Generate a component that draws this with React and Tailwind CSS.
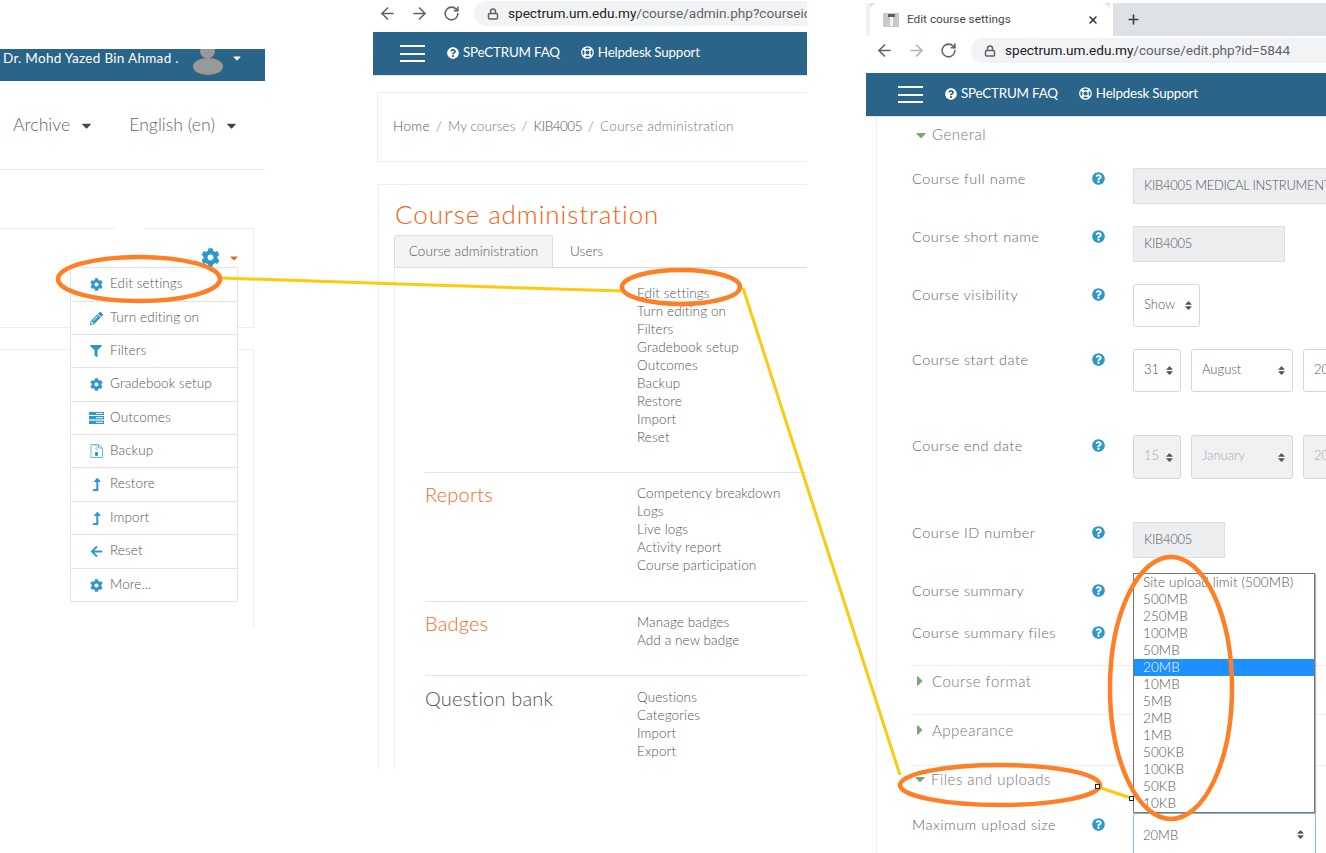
import React from "react";
import { FaCog, FaPencilAlt, FaFilter, FaLevelUpAlt, FaArrowLeft, FaQuestionCircle, FaRegLifeRing, FaCaretDown, FaCaretRight, FaSort } from "react-icons/fa";
import { ArrowLeft, ArrowRight, RotateCw, Lock, X, Plus } from "lucide-react";

const OutcomesIcon = () => (
  <svg width="15" height="12" viewBox="0 0 15 12" fill="#2f98c9">
    <rect x="0" y="0" width="15" height="3" />
    <rect x="0" y="4" width="15" height="3.4" />
    <rect x="0" y="8.6" width="15" height="3.4" />
    <rect x="7" y="1" width="7" height="1" fill="#fff" />
    <rect x="7" y="5.2" width="7" height="1" fill="#fff" />
    <rect x="7" y="9.8" width="7" height="1" fill="#fff" />
  </svg>
);

const BackupIcon = () => (
  <svg width="13" height="14" viewBox="0 0 13 14" fill="none">
    <path d="M1 .5h7.5L12.5 4v9.5H1z" fill="#fff" stroke="#6db8e0" />
    <path d="M8.5.5V4h4" stroke="#6db8e0" />
    <path d="M5.5 1h1v1h-1zM6.5 2.5h1v1h-1zM5.5 4h1v1h-1zM6.5 5.5h1v1h-1z" fill="#2f98c9" />
    <rect x="5" y="8" width="3" height="4" rx="1" fill="#2f98c9" />
  </svg>
);

const menu = [
  ["Edit settings", <FaCog size={13} />, "h-[33px]"],
  ["Turn editing on", <FaPencilAlt size={13} />, "h-[33px]"],
  ["Filters", <FaFilter size={12} />, "h-[33px]"],
  ["Gradebook setup", <FaCog size={13} />, "h-[34px]"],
  ["Outcomes", <OutcomesIcon />, "h-[33px]"],
  ["Backup", <BackupIcon />, "h-[33px]"],
  ["Restore", <FaLevelUpAlt size={13} />, "h-[34px]"],
  ["Import", <FaLevelUpAlt size={13} />, "h-[33px]"],
  ["Reset", <FaArrowLeft size={13} />, "h-[34px]"],
  ["More...", <FaCog size={13} />, "h-[33px]"],
];

function Topbar({ right }) {
  return (
    <div className="h-[44px] bg-[#2a6488] border-b border-[#dfe3e6] flex items-center text-white text-[13.4px] font-normal tracking-[-0.2px]">
      <div className={`${right ? "ml-[32px]" : "ml-[27px]"} w-[25px] flex flex-col gap-[5.5px]`}>
        <span className="block h-[2px] bg-white" />
        <span className="block h-[2px] bg-white" />
        <span className="block h-[2px] bg-white" />
      </div>
      <FaQuestionCircle size={12} className="ml-[22px] -mt-[2px]" />
      <span className="ml-[4px] -mt-[2px]">SPeCTRUM FAQ</span>
      <FaRegLifeRing size={13} className="ml-[21px] -mt-[2px]" />
      <span className="ml-[4px] -mt-[2px]">Helpdesk Support</span>
    </div>
  );
}

function Nav({ url1, url2, forward }) {
  return (
    <div className="flex items-center text-[#5f6368]">
      <ArrowLeft size={19} strokeWidth={2} />
      <ArrowRight size={19} strokeWidth={2} className={`ml-[13px] ${forward}`} />
      <RotateCw size={17} strokeWidth={2.2} className="ml-[14px]" />
      <div className="ml-[14px] flex-1 h-[25px] bg-[#f1f3f4] rounded-l-full flex items-center pl-[13px] overflow-hidden whitespace-nowrap font-['Roboto',sans-serif] font-normal text-[13.6px]">
        <Lock size={12} strokeWidth={3} className="shrink-0" />
        <span className="ml-[9px] text-[#202124]">{url1}</span>
        <span>{url2}</span>
      </div>
    </div>
  );
}

function Left() {
  return (
    <div className="w-[265px] shrink-0 relative pt-[49px]">
      <div className="h-[32px] bg-[#2a6488] flex items-start text-white text-[13.5px] font-normal pl-[3px] relative">
        <span className="leading-[18px] tracking-[0.3px]">Dr. Mohd Yazed Bin Ahmad .</span>
        <div className="absolute left-[193px] top-0 w-[30px] h-[26px] overflow-hidden">
          <div className="absolute left-[7px] -top-[4px] w-[15px] h-[13px] rounded-full bg-[#999]" />
          <div className="absolute left-0 top-[9px] w-[30px] h-[17px] rounded-[50%] bg-[#999]" />
        </div>
        <FaCaretDown size={12} className="absolute left-[231px] top-[3px]" />
      </div>
      <div className="h-[89px] border-b border-[#e6e6e6] flex items-center text-[#666] text-[17.7px]">
        <span className="ml-[13px]">Archive</span>
        <FaCaretDown size={15} className="ml-[9px] text-[#444]" />
        <span className="ml-[35px]">English (en)</span>
        <FaCaretDown size={15} className="ml-[9px] text-[#444]" />
      </div>
      <div className="mt-[58px] w-[254px] h-[100px] border-t border-r border-b border-[#eeeeee]" />
      <div className="mt-[21px] w-[254px] h-[279px] border-t border-r border-[#eeeeee]" />
      <div className="absolute left-[116px] top-[227px] w-[28px] h-[3px] bg-white" />
      <div className="absolute left-[201px] top-[248px] flex items-center text-[#2f98c9]">
        <FaCog size={19} />
        <FaCaretDown size={12} className="ml-[8px] text-[#f5631b]" />
      </div>
      <div className="absolute left-[70px] top-[267px] w-[168px] border border-[#e3e3e3] bg-white text-[13.5px] tracking-[0.1px] text-[#555]">
        {menu.map(([label, icon, h], i) => (
          <div key={label} className={`${h} flex items-center ${i ? "border-t border-[#e3e3e3]" : ""}`}>
            <span className="w-[39px] flex justify-center pl-[11px] text-[#2f98c9]">{icon}</span>
            <span className="-mt-[2px]">{label}</span>
          </div>
        ))}
      </div>
    </div>
  );
}

function Links({ items }) {
  return (
    <div className="text-[13.5px] tracking-[0.1px] leading-[18px] text-[#555]">
      {items.map((t) => <div key={t}>{t}</div>)}
    </div>
  );
}

function Section({ title, color, items, first, pad }) {
  return (
    <div className={`ml-[30px] flex ${pad} ${first ? "" : "border-t border-[#e3e3e3]"}`}>
      <div className={`w-[212px] -mt-[4px] text-[20px] tracking-[0.2px] leading-[28px] ${color}`}>{title}</div>
      <Links items={items} />
    </div>
  );
}

function Middle() {
  return (
    <div className="ml-[108px] w-[434px] shrink-0 overflow-hidden">
      <div className="h-[32px] pl-[5px] pt-[1px]">
        <Nav url1="spectrum.um.edu.my" url2="/course/admin.php?courseid=5844" forward="" />
      </div>
      <Topbar />
      <div className="mt-[16px] ml-[4px] h-[70px] border-l border-t border-b border-[#eeeeee] flex items-center pb-[2px] pl-[15px] text-[13.5px] tracking-[0.1px] text-[#777] whitespace-nowrap">
        <span className="text-[#555] tracking-[0.4px]">Home</span>
        <span className="mx-[6px]">/</span>
        <span>My courses</span>
        <span className="mx-[6px]">/</span>
        <span className="text-[#555] tracking-[-0.5px]">KIB4005</span>
        <span className="mx-[6px]">/</span>
        <span className="tracking-[0.3px]">Course administration</span>
      </div>
      <div className="mt-[22px] ml-[5px] h-[586px] border-l border-t border-[#eeeeee] pl-[15px]">
        <h1 className="mt-[12px] ml-[1px] text-[26px] leading-[34px] text-[#f95e0f] tracking-[0.9px]">Course administration</h1>
        <div className="mt-[4px] flex h-[33px] border-b border-[#dddddd] text-[13.5px] tracking-[0.1px] text-[#555]">
          <div className="w-[159px] h-[33px] bg-[#f4f4f4] border border-[#dddddd] rounded-t-[3px] flex items-center justify-center">Course administration</div>
          <div className="ml-[17px] flex items-center">Users</div>
        </div>
        <div className="border-l border-[#eeeeee] h-[502px] pt-[16px]">
          <Section first color="" title="" pad="pb-[26px]" items={["Edit settings", "Turn editing on", "Filters", "Gradebook setup", "Outcomes", "Backup", "Restore", "Import", "Reset"]} />
          <Section color="text-[#f96a1e]" title="Reports" pad="pt-[11px] pb-[27px]" items={["Competency breakdown", "Logs", "Live logs", "Activity report", "Course participation"]} />
          <Section color="text-[#f96a1e]" title="Badges" pad="pt-[11px] pb-[26px]" items={["Manage badges", "Add a new badge"]} />
          <Section color="text-[#555]" title="Question bank" pad="pt-[12px] pb-[26px]" items={["Questions", "Categories", "Import", "Export"]} />
        </div>
      </div>
    </div>
  );
}

function Help() {
  return (
    <span className="w-[41px] shrink-0 h-[20px] flex items-center text-[#2f98c9]">
      <FaQuestionCircle size={13} />
    </span>
  );
}

function Row({ label, h, children }) {
  return (
    <div className={`flex ${h}`}>
      <div className="w-[180px] shrink-0 h-[22px] leading-[22px] text-[14.5px] text-[#666] tracking-[0.5px]">{label}</div>
      <Help />
      <div className="flex-1 flex gap-[10px] items-start overflow-hidden text-[13px]">{children}</div>
    </div>
  );
}

function Sel({ w, h, text, disabled }) {
  return (
    <div className={`${w} ${h} shrink-0 rounded-[3px] border border-[#d6d6d6] flex items-center pl-[10px] justify-between pr-[5px] ${disabled ? "bg-[#f0f1f2] text-[#aaa]" : "bg-white text-[#555]"}`}>
      <span className="whitespace-nowrap -mt-[2px]">{text}</span>
      <FaSort size={11} className="text-[#555] shrink-0" />
    </div>
  );
}

function Inp({ w, text }) {
  return (
    <div className={`${w} h-[36px] shrink-0 bg-[#eceef0] border border-[#dedede] flex items-center pl-[10px] text-[13px] tracking-[-0.3px] text-[#555] whitespace-nowrap overflow-hidden`}>{text}</div>
  );
}

function Collapsed({ label, h }) {
  return (
    <div className={`ml-[45px] ${h} border-t border-[#eeeeee] flex items-start pt-[5px] leading-[20px] text-[15px] text-[#777] tracking-[0.5px]`}>
      <FaCaretRight size={16} className="text-[#79a877] mt-[2px] ml-[1px]" />
      <span className="ml-[4px]">{label}</span>
    </div>
  );
}

const sizes = ["Site upload limit (500MB)", "500MB", "250MB", "100MB", "50MB", "20MB", "10MB", "5MB", "2MB", "1MB", "500KB", "100KB", "50KB", "10KB"];

function Right() {
  return (
    <div className="ml-[59px] flex-1 relative overflow-hidden">
      <div className="h-[3px]" />
      <div className="h-[33px] flex bg-[#dee1e6]">
        <div className="w-[4px] bg-[#f1f2f4]" />
        <div className="w-[240px] bg-white rounded-t-[8px] flex items-center pl-[13px] pr-[11px] font-['Roboto',sans-serif] font-normal text-[11.8px] text-[#45494d]">
          <svg width="16" height="14" viewBox="0 0 16 14"><rect x="0" y="0" width="16" height="14" fill="#c9c9c5" /><rect x="5" y="1" width="7" height="3" fill="#5c5c5c" /><rect x="7" y="4" width="3" height="9" fill="#f3f3f3" /></svg>
          <span className="ml-[8px] flex-1">Edit course settings</span>
          <X size={12} strokeWidth={3} className="text-[#333]" />
        </div>
        <div className="w-[3px] bg-white" />
        <Plus size={15} strokeWidth={2.5} className="ml-[13px] mt-[9px] text-[#3c4043]" />
      </div>
      <div className="h-[37px] pl-[9px] pt-[2px] bg-white">
        <Nav url1="spectrum.um.edu.my" url2="/course/edit.php?id=5844" forward="text-[#b0b3b6]" />
      </div>
      <Topbar right />
      <div className="ml-[10px] border-l border-[#eeeeee] h-[736px] pl-[35px]">
        <div className="h-[51px] pt-[7px] flex items-start text-[15px] text-[#777] tracking-[0.5px] leading-[20px]">
          <FaCaretDown size={16} className="text-[#79a877] mt-[3px] ml-[1px]" />
          <span className="ml-[3px]">General</span>
        </div>
        <Row label="Course full name" h="h-[58px]"><Inp w="w-[300px]" text="KIB4005 MEDICAL INSTRUMENTATION" /></Row>
        <Row label="Course short name" h="h-[58px]"><Inp w="w-[152px]" text="KIB4005" /></Row>
        <Row label="Course visibility" h="h-[65px]"><Sel w="w-[67px]" h="h-[43px]" text="Show" /></Row>
        <Row label="Course start date" h="h-[86px]">
          <Sel w="w-[48px]" h="h-[43px]" text="31" />
          <Sel w="w-[102px]" h="h-[43px]" text="August" />
          <Sel w="w-[80px]" h="h-[43px]" text="2020" />
        </Row>
        <Row label="Course end date" h="h-[87px]">
          <Sel w="w-[48px]" h="h-[44px]" text="15" disabled />
          <Sel w="w-[102px]" h="h-[44px]" text="January" disabled />
          <Sel w="w-[80px]" h="h-[44px]" text="2021" disabled />
        </Row>
        <Row label="Course ID number" h="h-[58px]"><Inp w="w-[92px]" text="KIB4005" /></Row>
        <Row label="Course summary" h="h-[42px]" />
        <Row label="Course summary files" h="h-[43px]" />
      </div>
      <div className="absolute left-0 right-0 top-[665px]">
        <Collapsed label="Course format" h="h-[49px]" />
        <Collapsed label="Appearance" h="h-[51px]" />
        <div className="ml-[46px] h-[49px] flex items-start pt-[4px] leading-[20px] text-[15px] text-[#777] tracking-[0.5px] relative">
          <div className="absolute -left-[1px] right-0 top-0 border-t border-[#eeeeee]" />
          <FaCaretDown size={16} className="text-[#79a877] mt-[2px]" />
          <span className="ml-[3px]">Files and uploads</span>
        </div>
        <div className="ml-[46px]">
          <Row label="Maximum upload size" h="h-[40px]" />
        </div>
      </div>
      <div className="absolute left-[267px] top-[573px] w-[182px] h-[240px] bg-white border border-[#767676] shadow-[1px_1px_1px_rgba(0,0,0,0.3)] text-[13.5px] tracking-[0.1px] leading-[17px] text-[#555]">
        {sizes.map((s) => (
          <div key={s} className={`pl-[9px] h-[17px] whitespace-nowrap ${s === "20MB" ? "bg-[#1e90ff] text-white" : ""}`}>{s}</div>
        ))}
      </div>
      <div className="absolute left-[267px] top-[813px] w-[183px] h-[50px] bg-white border border-[#7fb8d8] rounded-[3px] flex items-start justify-between pl-[9px] pr-[9px] pt-[12px] text-[13px] text-[#555]">
        <span>20MB</span>
        <FaSort size={11} className="mt-[3px]" />
      </div>
    </div>
  );
}

export default function App() {
  return (
    <div className="relative w-[1326px] h-[853px] bg-white overflow-hidden flex font-['Lato',sans-serif] font-light">
      <Left />
      <Middle />
      <Right />
      <svg className="absolute inset-0 pointer-events-none" width="1326" height="853" viewBox="0 0 1326 853" fill="none">
        <polyline points="221,278 400,284 622,291" stroke="#ffc90e" strokeWidth="3" />
        <polyline points="743,288 900,775" stroke="#ffc90e" strokeWidth="3" />
        <polyline points="1098,787 1131,798" stroke="#ffc90e" strokeWidth="3" />
        <ellipse cx="139" cy="279" rx="81" ry="22" stroke="#ff7f27" strokeWidth="4.5" />
        <ellipse cx="681" cy="287" rx="59" ry="17" stroke="#ff7f27" strokeWidth="4.5" />
        <ellipse cx="1000" cy="785" rx="100" ry="20" stroke="#ff7f27" strokeWidth="4.5" />
        <ellipse cx="1171" cy="688" rx="61" ry="131" stroke="#ff7f27" strokeWidth="4.5" />
        <rect x="1095.5" y="784.5" width="4" height="4" fill="#fff" stroke="#222" />
        <rect x="1129.5" y="796.5" width="4" height="4" fill="#fff" stroke="#222" />
      </svg>
    </div>
  );
}
